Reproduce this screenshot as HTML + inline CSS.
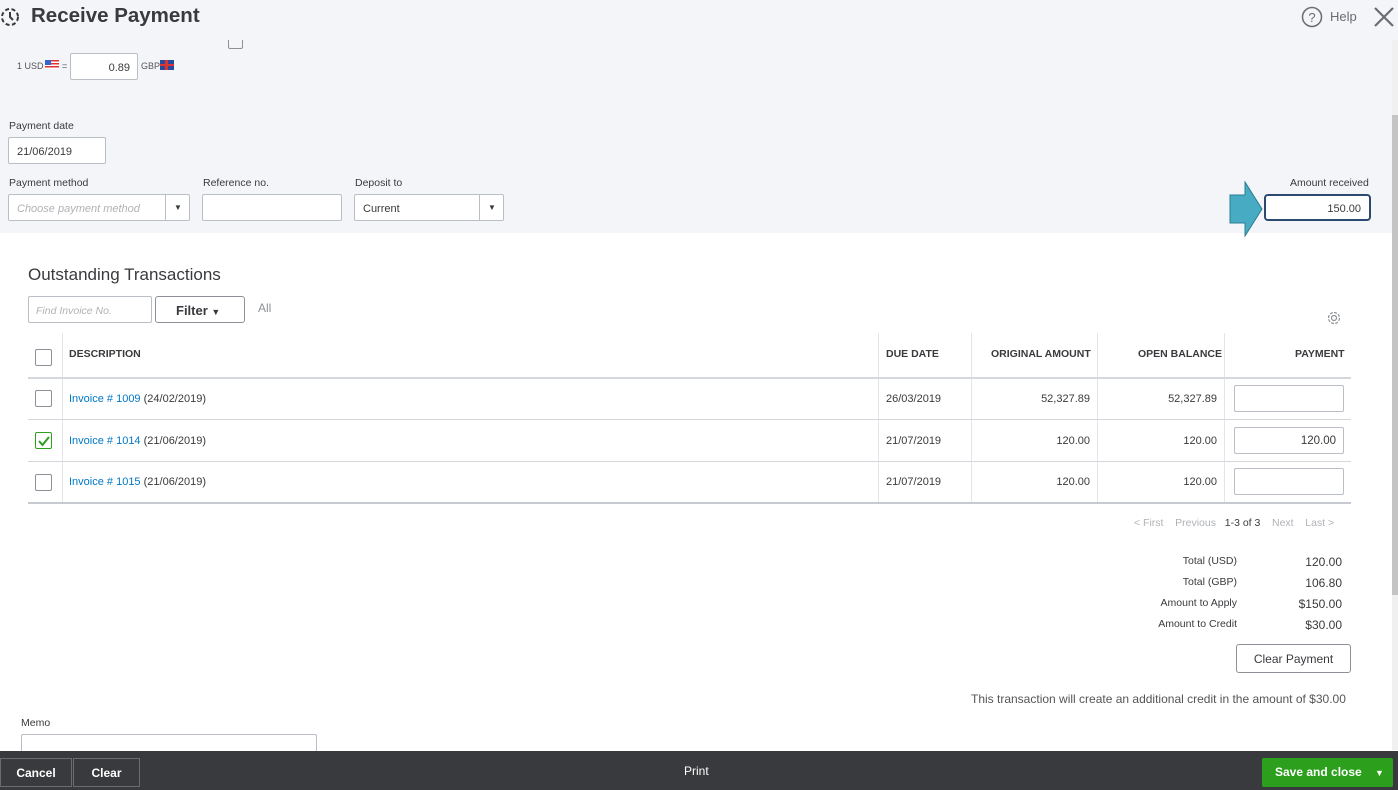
<!DOCTYPE html>
<html><head><style>
*{box-sizing:border-box;margin:0;padding:0}
body{width:1398px;height:790px;position:relative;overflow:hidden;background:#fff;font-family:"Liberation Sans",sans-serif;color:#393a3d}
.a{position:absolute}
.lbl{font-size:10.5px;color:#393a3d}
.in{position:absolute;background:#fff;border:1px solid #babec5;border-radius:2px;font-size:11px;color:#393a3d}
.th{position:absolute;font-size:10.5px;font-weight:bold;color:#393a3d}
.td{position:absolute;font-size:11px;color:#393a3d}
.cb{position:absolute;width:17px;height:17px;border:1px solid #8d9096;border-radius:2px;background:#fff}
.hl{position:absolute;left:28px;width:1323px;height:1px;background:#d4d7dc}
.vl{position:absolute;width:1px;background:#e3e5e8}
.lnk{color:#0077c5}
.r{text-align:right}
</style></head><body>
<div class="a" style="left:0;top:0;width:1398px;height:233px;background:#f4f5f8"></div>
<svg class="a" style="left:0;top:5px" width="22" height="24" viewBox="0 0 22 24"><circle cx="10" cy="12" r="8" fill="none" stroke="#393a3d" stroke-width="2" stroke-dasharray="4 2.5"/><path d="M10 7v5l3 3" stroke="#393a3d" stroke-width="2" fill="none"/></svg>
<div class="a" style="left:31px;top:4px;font-size:20.5px;font-weight:bold;color:#393a3d">Receive Payment</div>
<svg class="a" style="left:1301px;top:6px" width="22" height="22"><circle cx="11" cy="11" r="9.5" fill="none" stroke="#6b6c72" stroke-width="1.5"/><text x="11" y="16" font-size="13" text-anchor="middle" fill="#6b6c72" font-family="Liberation Sans">?</text></svg>
<div class="a" style="left:1330px;top:9px;font-size:13px;color:#6b6c72">Help</div>
<svg class="a" style="left:1373px;top:6px" width="22" height="22"><path d="M2 2L20 20M20 2L2 20" stroke="#6b6c72" stroke-width="2.2"/></svg>
<div class="a" style="left:1392px;top:40px;width:6px;height:710px;background:#f0f0f0"></div>
<div class="a" style="left:1392px;top:115px;width:6px;height:480px;background:#c4c4c4"></div>
<div class="a" style="left:228px;top:40px;width:15px;height:9px;border:1px solid #8d9096;border-top:none;border-radius:0 0 2px 2px"></div>
<div class="a" style="left:17px;top:61px;font-size:9px;color:#555">1 USD</div>
<div class="a" style="left:45px;top:60px;width:14px;height:9px;background:repeating-linear-gradient(#d33 0 1.5px,#fff 1.5px 3px)"><div style="width:6px;height:5px;background:#36c"></div></div>
<div class="a" style="left:62px;top:61px;font-size:9px;color:#555">=</div>
<div class="in r" style="left:70px;top:53px;width:68px;height:27px;padding:8px 7px 0 0;font-size:11px">0.89</div>
<div class="a" style="left:141px;top:61px;font-size:9px;color:#555">GBP</div>
<div class="a" style="left:160px;top:60px;width:14px;height:10px;background:#2a4a9a"><div style="position:absolute;left:5px;top:0;width:3px;height:10px;background:#d33"></div><div style="position:absolute;left:0;top:4px;width:14px;height:2px;background:#d33"></div></div>
<div class="a lbl" style="left:9px;top:120px">Payment date</div>
<div class="in" style="left:8px;top:137px;width:98px;height:27px;padding:8px 0 0 8px">21/06/2019</div>
<div class="a lbl" style="left:9px;top:177px">Payment method</div>
<div class="in" style="left:8px;top:194px;width:182px;height:27px;padding:8px 0 0 8px;color:#b0b2b6;font-style:italic">Choose payment method</div>
<div class="a" style="left:165px;top:195px;width:1px;height:25px;background:#babec5"></div>
<div class="a" style="left:174px;top:203px;font-size:8px">▼</div>
<div class="a lbl" style="left:203px;top:177px">Reference no.</div>
<div class="in" style="left:202px;top:194px;width:140px;height:27px"></div>
<div class="a lbl" style="left:355px;top:177px">Deposit to</div>
<div class="in" style="left:354px;top:194px;width:150px;height:27px;padding:8px 0 0 8px">Current</div>
<div class="a" style="left:479px;top:195px;width:1px;height:25px;background:#babec5"></div>
<div class="a" style="left:488px;top:203px;font-size:8px">▼</div>
<div class="a lbl" style="left:1290px;top:177px">Amount received</div>
<div class="in r" style="left:1264px;top:194px;width:107px;height:27px;border:2px solid #2c4a70;border-radius:4px;padding:7px 8px 0 0">150.00</div>
<svg class="a" style="left:1228px;top:181px" width="36" height="56"><path d="M2 14H17V1L34 28L17 55V42H2Z" fill="#46abc3" stroke="#2b7c92" stroke-width="1"/></svg>
<div class="a" style="left:28px;top:265px;font-size:17px;color:#393a3d">Outstanding Transactions</div>
<div class="in" style="left:28px;top:296px;width:124px;height:27px;padding:8px 0 0 7px;color:#b0b2b6;font-style:italic;font-size:10.5px">Find Invoice No.</div>
<div class="in" style="left:155px;top:296px;width:90px;height:27px;border-color:#8d9096;border-radius:3px;padding:6px 0 0 20px;font-size:13px;font-weight:bold">Filter <span style="font-size:9px">▼</span></div>
<div class="a" style="left:258px;top:301px;font-size:12px;color:#8d9096">All</div>
<svg class="a" style="left:1325px;top:309px" width="18" height="18" viewBox="0 0 18 18"><circle cx="9" cy="9" r="5.5" fill="none" stroke="#8d9096" stroke-width="1.2" stroke-dasharray="3 1.3"/><circle cx="9" cy="9" r="2.5" fill="none" stroke="#8d9096" stroke-width="1.2"/></svg>
<div class="vl" style="left:62px;top:333px;height:170px"></div>
<div class="vl" style="left:878px;top:333px;height:170px"></div>
<div class="vl" style="left:971px;top:333px;height:170px"></div>
<div class="vl" style="left:1097px;top:333px;height:170px"></div>
<div class="vl" style="left:1224px;top:333px;height:170px"></div>
<div class="cb" style="left:35px;top:349px"></div>
<div class="th" style="left:69px;top:348px">DESCRIPTION</div>
<div class="th" style="left:886px;top:348px">DUE DATE</div>
<div class="th" style="left:991px;top:348px">ORIGINAL AMOUNT</div>
<div class="th" style="left:1138px;top:348px">OPEN BALANCE</div>
<div class="th" style="left:1295px;top:348px">PAYMENT</div>
<div class="hl" style="top:377px;height:2px;background:#d4d7dc"></div>
<div class="cb" style="left:35px;top:390px"></div>
<div class="td" style="left:69px;top:393px"><span class="lnk">Invoice # 1009</span> (24/02/2019)</div>
<div class="td" style="left:886px;top:393px">26/03/2019</div>
<div class="td r" style="left:990px;top:393px;width:100px">52,327.89</div>
<div class="td r" style="left:1117px;top:393px;width:100px">52,327.89</div>
<div class="in" style="left:1234px;top:385px;width:110px;height:27px"></div>
<div class="hl" style="top:419px"></div>
<div class="cb" style="left:35px;top:432px;border-color:#2ca01c"></div>
<svg class="a" style="left:37px;top:434px" width="14" height="14"><path d="M2 7L5.5 11L12 3" stroke="#2ca01c" stroke-width="2" fill="none"/></svg>
<div class="td" style="left:69px;top:435px"><span class="lnk">Invoice # 1014</span> (21/06/2019)</div>
<div class="td" style="left:886px;top:435px">21/07/2019</div>
<div class="td r" style="left:990px;top:435px;width:100px">120.00</div>
<div class="td r" style="left:1117px;top:435px;width:100px">120.00</div>
<div class="in r" style="left:1234px;top:427px;width:110px;height:27px;padding:7px 7px 0 0;font-size:11.5px">120.00</div>
<div class="hl" style="top:461px"></div>
<div class="cb" style="left:35px;top:474px"></div>
<div class="td" style="left:69px;top:476px"><span class="lnk">Invoice # 1015</span> (21/06/2019)</div>
<div class="td" style="left:886px;top:476px">21/07/2019</div>
<div class="td r" style="left:990px;top:476px;width:100px">120.00</div>
<div class="td r" style="left:1117px;top:476px;width:100px">120.00</div>
<div class="in" style="left:1234px;top:468px;width:110px;height:27px"></div>
<div class="hl" style="top:502px;height:2px;background:#c7cad0"></div>
<div class="a" style="left:1134px;top:517px;font-size:10.5px;color:#b0b2b6">&lt; First&nbsp;&nbsp;&nbsp; Previous&nbsp;&nbsp; <span style="color:#393a3d">1-3 of 3</span>&nbsp;&nbsp;&nbsp; Next&nbsp;&nbsp;&nbsp; Last &gt;</div>
<div class="td r" style="left:1100px;top:555px;width:137px;font-size:10.5px">Total (USD)</div>
<div class="td r" style="left:1260px;top:555px;width:82px;font-size:12px">120.00</div>
<div class="td r" style="left:1100px;top:576px;width:137px;font-size:10.5px">Total (GBP)</div>
<div class="td r" style="left:1260px;top:576px;width:82px;font-size:12px">106.80</div>
<div class="td r" style="left:1100px;top:597px;width:137px;font-size:10.5px">Amount to Apply</div>
<div class="td r" style="left:1260px;top:597px;width:82px;font-size:12px">$150.00</div>
<div class="td r" style="left:1100px;top:618px;width:137px;font-size:10.5px">Amount to Credit</div>
<div class="td r" style="left:1260px;top:618px;width:82px;font-size:12px">$30.00</div>
<div class="in" style="left:1236px;top:644px;width:115px;height:29px;border-color:#8d9096;border-radius:3px;padding:7px 0 0 0;text-align:center;font-size:12px">Clear Payment</div>
<div class="td" style="left:971px;top:692px;font-size:12px;color:#555">This transaction will create an additional credit in the amount of $30.00</div>
<div class="a lbl" style="left:21px;top:717px">Memo</div>
<div class="in" style="left:21px;top:734px;width:296px;height:20px"></div>
<div class="a" style="left:0;top:751px;width:1398px;height:39px;background:#393a3d"></div>
<div class="a" style="left:0;top:758px;width:72px;height:29px;border:1px solid #6b6c72;color:#fff;font-size:12px;font-weight:bold;text-align:center;padding-top:7px">Cancel</div>
<div class="a" style="left:73px;top:758px;width:67px;height:29px;border:1px solid #6b6c72;color:#fff;font-size:12px;font-weight:bold;text-align:center;padding-top:7px">Clear</div>
<div class="a" style="left:684px;top:764px;color:#fff;font-size:12px">Print</div>
<div class="a" style="left:1262px;top:758px;width:131px;height:29px;background:#2ca01c;border-radius:2px;color:#fff;font-size:12px;font-weight:bold;padding:7px 0 0 13px">Save and close <span style="margin-left:10px;font-size:9px">▼</span></div>
</body></html>
